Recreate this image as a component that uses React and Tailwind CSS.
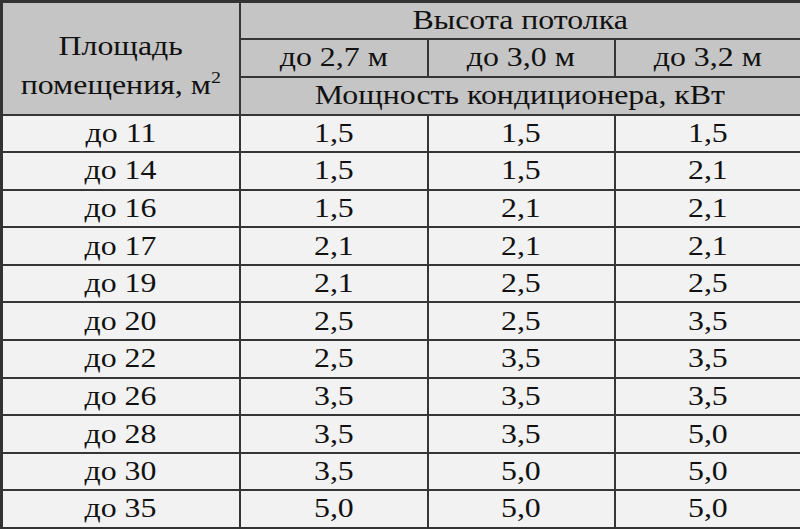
import React from "react";

const rows = [
  ["до 11", "1,5", "1,5", "1,5"],
  ["до 14", "1,5", "1,5", "2,1"],
  ["до 16", "1,5", "2,1", "2,1"],
  ["до 17", "2,1", "2,1", "2,1"],
  ["до 19", "2,1", "2,5", "2,5"],
  ["до 20", "2,5", "2,5", "3,5"],
  ["до 22", "2,5", "3,5", "3,5"],
  ["до 26", "3,5", "3,5", "3,5"],
  ["до 28", "3,5", "3,5", "5,0"],
  ["до 30", "3,5", "5,0", "5,0"],
  ["до 35", "5,0", "5,0", "5,0"],
];

const cell = "border-2 border-[#363636] text-center align-middle p-0 font-normal";

// the source picture is stretched sideways, so glyphs get widened
function T({ children }) {
  return <span className="inline-block scale-x-[1.18] whitespace-nowrap">{children}</span>;
}

export default function App() {
  return (
    <div className="w-[800px] h-[529px] bg-[#f2f2f2] overflow-hidden">
      <table
        className="w-[800px] h-[529px] border-collapse table-fixed text-[27px] leading-none text-[#111] border-[3px] border-[#333]"
        style={{ fontFamily: '"Liberation Serif", "Times New Roman", serif' }}
      >
        <colgroup>
          <col className="w-[238px]" />
          <col className="w-[188px]" />
          <col className="w-[187px]" />
          <col className="w-[187px]" />
        </colgroup>
        <thead className="bg-[#c5c5c5]">
          <tr className="h-[37px]">
            <th rowSpan={3} className={`${cell} pt-[16px]`}>
              <div className="flex flex-col items-center gap-[12px]">
                <T>Площадь</T>
                <T>
                  помещения, м<sup className="text-[17px] -top-[11px]">2</sup>
                </T>
              </div>
            </th>
            <th colSpan={3} className={cell}><T>Высота потолка</T></th>
          </tr>
          <tr className="h-[38px]">
            <th className={cell}><T>до 2,7 м</T></th>
            <th className={cell}><T>до 3,0 м</T></th>
            <th className={cell}><T>до 3,2 м</T></th>
          </tr>
          <tr className="h-[38px]">
            <th colSpan={3} className={cell}><T>Мощность кондиционера, кВт</T></th>
          </tr>
        </thead>
        <tbody className="bg-[#f2f2f2]">
          {rows.map((r, i) => (
            <tr key={i} className="h-[37.6px]">
              {r.map((v, j) => (
                <td key={j} className={cell}><T>{v}</T></td>
              ))}
            </tr>
          ))}
        </tbody>
      </table>
    </div>
  );
}
